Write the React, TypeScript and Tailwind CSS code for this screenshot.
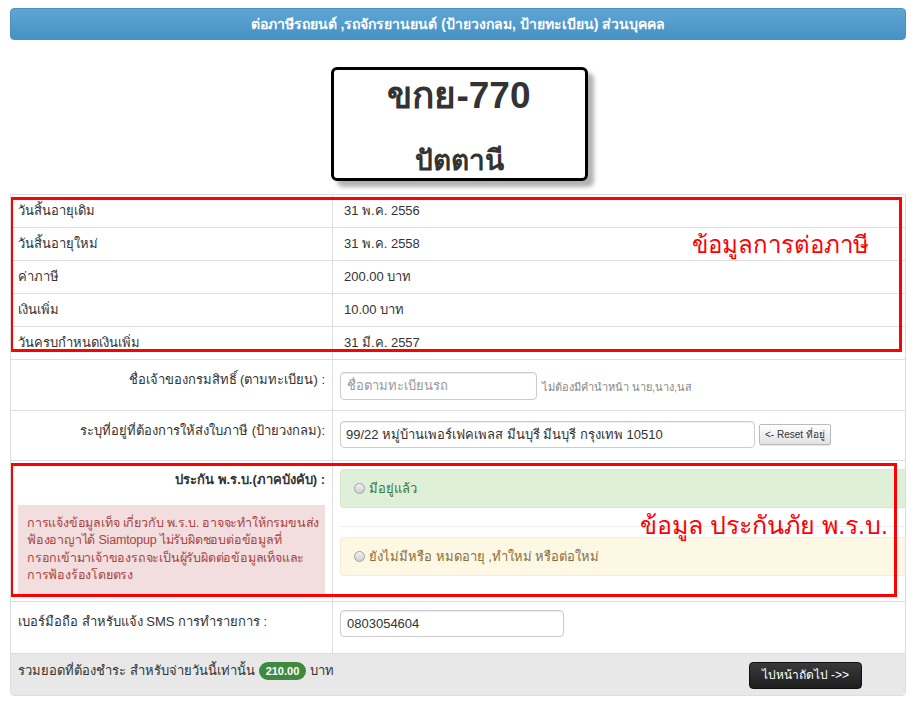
import React from "react";

const FONT = { fontFamily: "Tahoma, 'Liberation Sans', 'Noto Sans', sans-serif" };

function Radio() {
  return (
    <span className="inline-block size-[11px] shrink-0 rounded-full border border-[#a0a0a0] bg-gradient-to-b from-[#f2f2f2] to-[#cfcfcf]" />
  );
}

export default function App() {
  const info = [
    ["วันสิ้นอายุเดิม", "31 พ.ค. 2556"],
    ["วันสิ้นอายุใหม่", "31 พ.ค. 2558"],
    ["ค่าภาษี", "200.00 บาท"],
    ["เงินเพิ่ม", "10.00 บาท"],
    ["วันครบกำหนดเงินเพิ่ม", "31 มี.ค. 2557"],
  ];

  return (
    <div className="min-h-[710px] w-[916px] bg-white text-[13px] text-[#333]" style={FONT}>
      <div className="mx-[10px] pt-[8px]">
        {/* header */}
        <div className="flex h-[32px] items-center justify-center rounded-[4px] border border-[#4a90c0] bg-gradient-to-b from-[#5da5d3] to-[#4792c4] text-[14px] font-bold text-white">
          ต่อภาษีรถยนต์ ,รถจักรยานยนต์ (ป้ายวงกลม, ป้ายทะเบียน) ส่วนบุคคล
        </div>

        {/* plate */}
        <div className="mt-[27px] flex justify-center pl-[2px]">
          <div className="flex h-[114px] w-[257px] flex-col items-center rounded-[6px] border-[3px] border-black bg-white shadow-[6px_6px_4px_rgba(0,0,0,0.3)]">
            <div className="mt-[3px] text-[37px] font-bold leading-[46px] text-[#333]">ขกย-770</div>
            <div className="mt-[17px] h-px w-[225px] bg-[#e6e6e6]" />
            <div className="mt-[7px] text-[28px] font-bold leading-[36px] text-[#333]">ปัตตานี</div>
          </div>
        </div>

        {/* table */}
        <div className="relative mt-[13px] overflow-hidden rounded-b-[4px] border border-[#dddddd]">
          {info.map(([k, v]) => (
            <div key={k} className="grid h-[33px] grid-cols-[322px_1fr] border-b border-[#dddddd]">
              <div className="flex items-center border-r border-[#dddddd] pl-[7px]">{k}</div>
              <div className="flex items-center pl-[11px]">{v}</div>
            </div>
          ))}

          <div className="grid h-[51px] grid-cols-[322px_1fr] border-b border-[#dddddd]">
            <div className="border-r border-[#dddddd] pr-[7px] pt-[10px] text-right">ชื่อเจ้าของกรมสิทธิ์ (ตามทะเบียน) :</div>
            <div className="flex items-center gap-[5px] pl-[7px] pt-[1px]">
              <input
                readOnly
                placeholder="ชื่อตามทะเบียนรถ"
                className="h-[28px] w-[197px] rounded-[4px] border border-[#cccccc] px-[6px] text-[13px] shadow-[inset_0_1px_1px_rgba(0,0,0,0.075)] outline-none placeholder:text-[#999]"
              />
              <span className="mt-[4px] text-[11px] text-[#888]">ไม่ต้องมีคำนำหน้า นาย,นาง,นส</span>
            </div>
          </div>

          <div className="grid h-[50px] grid-cols-[322px_1fr] border-b border-[#dddddd]">
            <div className="border-r border-[#dddddd] pr-[7px] pt-[10px] text-right">ระบุที่อยู่ที่ต้องการให้ส่งใบภาษี (ป้ายวงกลม):</div>
            <div className="flex items-center gap-[4px] pl-[7px] pb-[2px]">
              <input
                readOnly
                value="99/22 หมู่บ้านเพอร์เฟคเพลส มีนบุรี มีนบุรี กรุงเทพ 10510"
                className="h-[27px] w-[415px] rounded-[4px] border border-[#cccccc] px-[5px] text-[13px] text-[#333] shadow-[inset_0_1px_1px_rgba(0,0,0,0.075)] outline-none"
              />
              <button className="h-[21px] rounded-[2px] border border-[#bbbbbb] bg-gradient-to-b from-white to-[#e2e2e2] px-[5px] text-[10px] text-[#333] shadow-[0_1px_1px_rgba(0,0,0,0.1)]">
                &lt;- Reset ที่อยู่
              </button>
            </div>
          </div>

          <div className="grid h-[141px] grid-cols-[322px_1fr] border-b border-[#dddddd]">
            <div className="flex flex-col border-r border-[#dddddd] px-[7px]">
              <div className="pt-[9px] text-right font-bold">ประกัน พ.ร.บ.(ภาคบังคับ) :</div>
              <div className="mt-[15px] whitespace-nowrap bg-[#f2dede] pl-[9px] pt-[10px] pb-[9px] text-[12.5px] leading-[17.5px] tracking-[-0.2px] text-[#a94442]">
                การแจ้งข้อมูลเท็จ เกี่ยวกับ พ.ร.บ. อาจจะทำให้กรมขนส่ง
                <br />
                ฟ้องอาญาได้ Siamtopup ไม่รับผิดชอบต่อข้อมูลที่
                <br />
                กรอกเข้ามาเจ้าของรถจะเป็นผู้รับผิดต่อข้อมูลเท็จและ
                <br />
                การฟ้องร้องโดยตรง
              </div>
            </div>
            <div className="flex flex-col pl-[7px] pt-[8px]">
              <div className="flex h-[39px] items-center gap-[4px] rounded-l-[4px] border border-r-0 border-[#d6e9c6] bg-[#dff0d8] pl-[13px] text-[#3c763d]">
                <Radio />
                มีอยู่แล้ว
              </div>
              <div className="mt-[18px] h-px bg-[#eeeeee]" />
              <div className="mt-[10px] flex h-[39px] items-center gap-[4px] rounded-l-[4px] border border-r-0 border-[#faebcc] bg-[#fcf8e3] pl-[13px] text-[#8a6d3b]">
                <Radio />
                ยังไม่มีหรือ หมดอายุ ,ทำใหม่ หรือต่อใหม่
              </div>
            </div>
          </div>

          <div className="grid h-[52px] grid-cols-[322px_1fr] border-b border-[#dddddd]">
            <div className="border-r border-[#dddddd] pl-[7px] pt-[10px]">เบอร์มือถือ สำหรับแจ้ง SMS การทำรายการ :</div>
            <div className="pl-[7px] pt-[8px]">
              <input
                readOnly
                value="0803054604"
                className="h-[27px] w-[224px] rounded-[4px] border border-[#cccccc] px-[6px] text-[13px] text-[#333] shadow-[inset_0_1px_1px_rgba(0,0,0,0.075)] outline-none"
              />
            </div>
          </div>

          <div className="flex h-[41px] items-center justify-between bg-[#e8e8e8] pl-[7px] pr-[43px]">
            <div className="flex items-center gap-[4px] pb-[7px]">
              รวมยอดที่ต้องชำระ สำหรับจ่ายวันนี้เท่านั้น
              <span className="rounded-full bg-[#3f8a3f] px-[7px] py-[1px] text-[11px] font-bold text-white">210.00</span>
              บาท
            </div>
            <button className="mt-[1px] h-[27px] rounded-[4px] border border-[#111] bg-gradient-to-b from-[#3a3a3a] to-[#1e1e1e] px-[12px] text-[12px] text-white">
              ไปหน้าถัดไป -&gt;&gt;
            </button>
          </div>

          {/* annotation boxes */}
          <div className="pointer-events-none absolute left-[-1px] top-[2px] h-[155px] w-[892px] border-[3px] border-[#ff0000]">
            <div className="absolute right-[30px] top-[30px] text-[24px] leading-[30px] text-[#ff0000]">ข้อมูลการต่อภาษี</div>
          </div>
          <div className="pointer-events-none absolute left-[-1px] top-[268px] h-[134px] w-[887px] border-[3px] border-[#ff0000]">
            <div className="absolute right-[6px] top-[43px] text-[25px] leading-[32px] text-[#ff0000]">ข้อมูล ประกันภัย พ.ร.บ.</div>
          </div>
        </div>
      </div>
    </div>
  );
}
